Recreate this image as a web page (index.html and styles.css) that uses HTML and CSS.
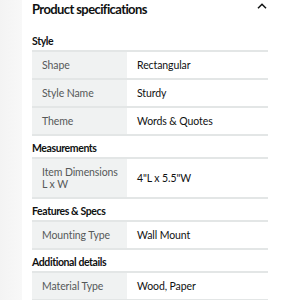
FILE: index.html
```html
<!DOCTYPE html>
<html>
<head>
<meta charset="utf-8">
<link rel="stylesheet" href="styles.css">
</head>
<body>
<div class="page">
  <div class="card">
    <div class="title-bar">
      <h1 class="title">Product specifications</h1>
      <svg class="chevron" width="10" height="6" viewBox="0 0 10 6"><path d="M1 5.2 L5 1.2 L9 5.2" fill="none" stroke="#0f1111" stroke-width="1.5"/></svg>
    </div>

    <h2 class="section">Style</h2>
    <div class="specs">
      <div class="row"><div class="label">Shape</div><div class="value">Rectangular</div></div>
      <div class="row"><div class="label">Style Name</div><div class="value">Sturdy</div></div>
      <div class="row"><div class="label">Theme</div><div class="value">Words &amp; Quotes</div></div>
    </div>

    <h2 class="section">Measurements</h2>
    <div class="specs">
      <div class="row"><div class="label">Item Dimensions L x W</div><div class="value">4"L x 5.5"W</div></div>
    </div>

    <h2 class="section">Features &amp; Specs</h2>
    <div class="specs">
      <div class="row"><div class="label">Mounting Type</div><div class="value">Wall Mount</div></div>
    </div>

    <h2 class="section">Additional details</h2>
    <div class="specs">
      <div class="row"><div class="label">Material Type</div><div class="value">Wood, Paper</div></div>
    </div>
  </div>
</div>
</body>
</html>
```

FILE: styles.css
```css
html, body {
  margin: 0;
  padding: 0;
  background: #ffffff;
}
body {
  font-family: Lato, "Liberation Sans", Arial, sans-serif;
  color: #0f1111;
}
.page {
  display: flex;
  min-height: 300px;
  background: linear-gradient(to right, #f3f3f3 0, #f8f8f8 22px, #ffffff 22px);
}
.card {
  flex: 1;
  padding: 2px 32px 0 32px;
  box-sizing: border-box;
  width: 300px;
}
.title-bar {
  display: flex;
  align-items: flex-start;
  justify-content: space-between;
  margin-bottom: 13px;
}
.title {
  margin: 0;
  font-size: 13px;
  line-height: 14px;
  font-weight: 700;
  letter-spacing: -0.6px;
}
.chevron {
  margin-top: 1px;
  margin-right: 1px;
}
.section {
  margin: 0;
  padding: 6px 0 3px 0;
  font-size: 10.5px;
  line-height: 12px;
  font-weight: 700;
  letter-spacing: -0.4px;
}
.specs {
  width: 236px;
  border-top: 2px solid #e3e6e6;
}
.row {
  display: grid;
  grid-template-columns: 95px 1fr;
  border-bottom: 2px solid #e3e6e6;
  font-size: 10.5px;
  line-height: 12px;
  letter-spacing: -0.1px;
}
.label {
  background: #f0f2f2;
  color: #565959;
  padding: 7px 2px 7px 10px;
  display: flex;
  align-items: center;
}
.value {
  color: #0f1111;
  padding: 7px 10px;
  display: flex;
  align-items: center;
}
```
